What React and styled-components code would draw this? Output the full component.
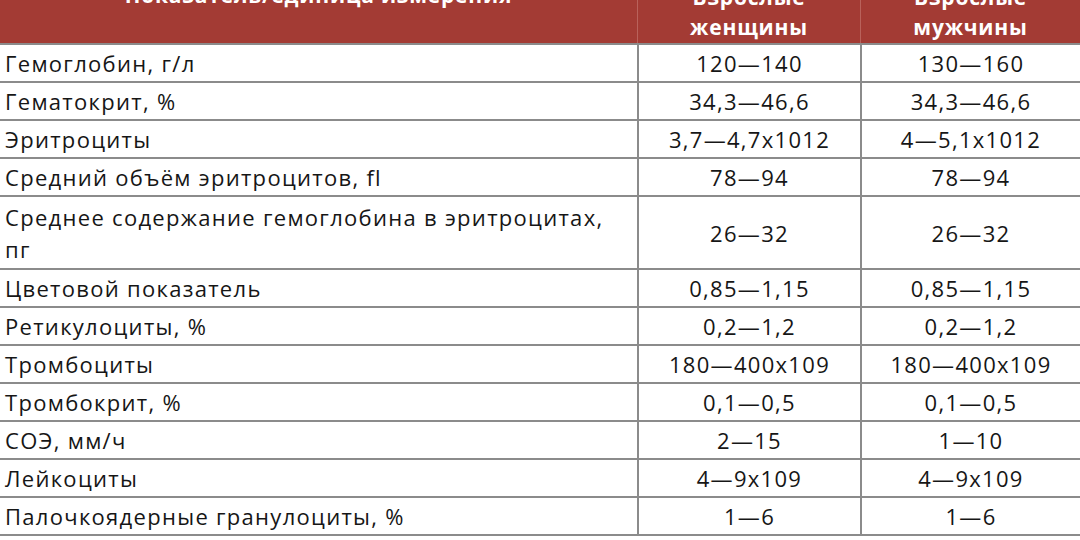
import React from "react";
import styled, { createGlobalStyle } from "styled-components";

const Global = createGlobalStyle`
  html, body { margin: 0; padding: 0; background: #fff; }
  body { width: 1080px; height: 540px; overflow: hidden; font-family: "Open Sans", "Noto Sans", sans-serif; }
`;

const Table = styled.div`
  width: 1080px;
  display: flex;
  flex-direction: column;
`;

const Row = styled.div`
  display: grid;
  grid-template-columns: 637px 223px 1fr;
  height: ${(p) => p.$h}px;
  box-sizing: border-box;
  border-bottom: 2px solid #8b8b8b;
`;

const HeadRow = styled.div`
  display: grid;
  grid-template-columns: 637px 223px 1fr;
  height: 45px;
  box-sizing: border-box;
  background: #a33b34;
  border-bottom: 2px solid #8b8b8b;
  overflow: hidden;
`;

const HeadCell = styled.div`
  display: flex;
  flex-direction: column;
  justify-content: flex-end;
  align-items: center;
  padding-bottom: ${(p) => p.$pb}px;
  border-left: ${(p) => (p.$first ? "none" : "1px solid #b9625b")};
  color: #fff;
  font-weight: 700;
  font-size: 21px;
  letter-spacing: 0.8px;
  line-height: 30px;
  text-align: center;
  overflow: hidden;
  white-space: nowrap;
`;

const Cell = styled.div`
  display: flex;
  align-items: center;
  justify-content: ${(p) => (p.$center ? "center" : "flex-start")};
  padding-left: ${(p) => (p.$center ? 0 : 5)}px;
  border-left: ${(p) => (p.$first ? "none" : "2px solid #8b8b8b")};
  color: #161616;
  font-size: 22px;
  font-weight: 500;
  letter-spacing: 1.3px;
  line-height: 32px;
  white-space: pre-line;
`;

const rows = [
  ["Гемоглобин, г/л", "120—140", "130—160"],
  ["Гематокрит, %", "34,3—46,6", "34,3—46,6"],
  ["Эритроциты", "3,7—4,7х1012", "4—5,1х1012"],
  ["Средний объём эритроцитов, fl", "78—94", "78—94"],
  ["Среднее содержание гемоглобина в эритроцитах,\nпг", "26—32", "26—32", 73],
  ["Цветовой показатель", "0,85—1,15", "0,85—1,15"],
  ["Ретикулоциты, %", "0,2—1,2", "0,2—1,2"],
  ["Тромбоциты", "180—400х109", "180—400х109"],
  ["Тромбокрит, %", "0,1—0,5", "0,1—0,5"],
  ["СОЭ, мм/ч", "2—15", "1—10"],
  ["Лейкоциты", "4—9х109", "4—9х109"],
  ["Палочкоядерные гранулоциты, %", "1—6", "1—6"],
];

export default function App() {
  return (
    <>
      <Global />
      <Table>
        <HeadRow>
          <HeadCell $first $pb={33}>Показатель/единица измерения</HeadCell>
          <HeadCell $pb={1}>
            <span>Взрослые</span>
            <span>женщины</span>
          </HeadCell>
          <HeadCell $pb={1}>
            <span>Взрослые</span>
            <span>мужчины</span>
          </HeadCell>
        </HeadRow>
        {rows.map(([name, w, m, h]) => (
          <Row key={name} $h={h || 38}>
            <Cell $first>{name}</Cell>
            <Cell $center>{w}</Cell>
            <Cell $center>{m}</Cell>
          </Row>
        ))}
      </Table>
    </>
  );
}
